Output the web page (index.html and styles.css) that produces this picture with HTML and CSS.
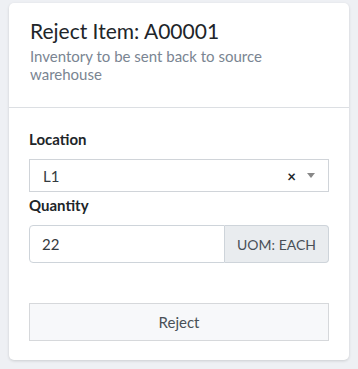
FILE: index.html
```html
<!DOCTYPE html>
<html lang="en">
<head>
    <meta charset="UTF-8">
    <meta name="viewport" content="width=device-width, initial-scale=1.0">
    <title>Reject Item</title>
    <link rel="stylesheet" href="styles.css">
</head>
<body>
    <div class="card">
        <div class="card-header">
            <h3>Reject Item: A00001</h3>
            <p>Inventory to be sent back to source warehouse</p>
        </div>
        <form class="card-body">
            <div class="form-group">
                <label>Location</label>
                <div class="select">
                    <span class="select-value">L1</span>
                    <span class="select-clear">&times;</span>
                    <span class="select-arrow"></span>
                </div>
            </div>
            <div class="form-group">
                <label for="qty">Quantity</label>
                <div class="input-group">
                    <input type="text" id="qty" value="22">
                    <span class="addon">UOM: EACH</span>
                </div>
            </div>
            <button type="button" class="reject">Reject</button>
        </form>
    </div>
</body>
</html>
```

FILE: styles.css
```css
body {
    font-family: Lato, "Noto Sans", sans-serif;
    background-color: #eef0f4;
    margin: 0;
    padding: 3px 9px 9px 9px;
}
.card {
    background-color: #ffffff;
    border-radius: 5px;
    box-shadow: 0 1px 3px rgba(0, 0, 0, 0.15);
    width: 340px;
    height: 357px;
}
.card-header {
    padding: 15px 20px 24px 21px;
    border-bottom: 1px solid #dcdfe3;
}
.card-header h3 {
    margin: 0;
    font-size: 21px;
    font-weight: normal;
    color: #212529;
    line-height: 1.2;
}
.card-header p {
    margin: 4px 0 0 0;
    font-size: 15px;
    line-height: 18px;
    color: #7a8592;
}
.card-body {
    padding: 22px 20px 20px 20px;
}
.form-group {
    margin-bottom: 4px;
}
.form-group label {
    display: block;
    font-weight: bold;
    font-size: 15px;
    color: #212529;
    margin-bottom: 11px;
}
.select {
    display: flex;
    align-items: center;
    height: 33px;
    border: 1px solid #d0d4d9;
    padding: 0 13px 0 13px;
    box-sizing: border-box;
}
.select-value {
    flex: 1;
    font-size: 15px;
    color: #343a40;
}
.select-clear {
    font-size: 15px;
    font-weight: bold;
    color: #212529;
    margin-right: 11px;
}
.select-arrow {
    border-left: 4px solid transparent;
    border-right: 4px solid transparent;
    border-top: 5px solid #888888;
}
.input-group {
    display: flex;
    height: 38px;
}
.input-group input {
    flex: 1;
    min-width: 0;
    font-family: inherit;
    font-size: 15px;
    color: #343a40;
    padding: 0 12px;
    border: 1px solid #ced4da;
    border-radius: 4px 0 0 4px;
}
.addon {
    display: flex;
    align-items: center;
    padding: 0 12px;
    font-size: 14px;
    color: #495057;
    background-color: #e9ecef;
    border: 1px solid #ced4da;
    border-left: none;
    border-radius: 0 4px 4px 0;
}
.reject {
    display: block;
    width: 100%;
    margin-top: 40px;
    height: 38px;
    font-family: inherit;
    font-size: 15px;
    color: #495057;
    background-color: #f7f8fa;
    border: 1px solid #d6d8db;
}
```
